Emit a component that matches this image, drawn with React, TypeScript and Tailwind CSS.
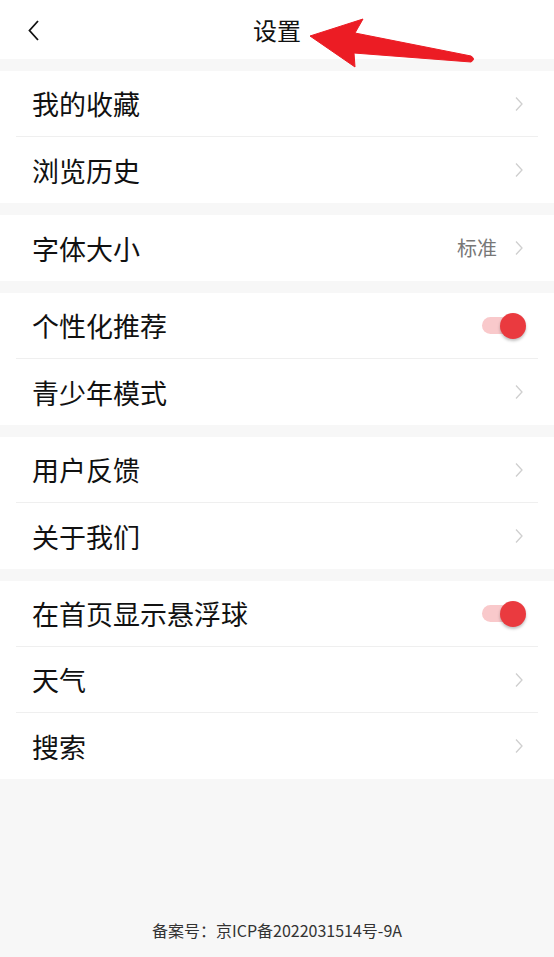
import React from "react";

type Row = { label: string; kind: "link" | "toggle"; value?: string };

const groups: Row[][] = [
  [
    { label: "我的收藏", kind: "link" },
    { label: "浏览历史", kind: "link" },
  ],
  [{ label: "字体大小", kind: "link", value: "标准" }],
  [
    { label: "个性化推荐", kind: "toggle" },
    { label: "青少年模式", kind: "link" },
  ],
  [
    { label: "用户反馈", kind: "link" },
    { label: "关于我们", kind: "link" },
  ],
  [
    { label: "在首页显示悬浮球", kind: "toggle" },
    { label: "天气", kind: "link" },
    { label: "搜索", kind: "link" },
  ],
];

function Chevron() {
  return (
    <svg width="10" height="16" viewBox="0 0 10 16" className="shrink-0">
      <path d="M2 1.5 L8 8 L2 14.5" fill="none" stroke="#cfcfcf" strokeWidth="1.3" />
    </svg>
  );
}

function Toggle() {
  return (
    <div className="relative flex h-[26px] w-[44px] items-center">
      <div className="h-[17px] w-[36px] rounded-full bg-[#f9c9cb]" />
      <div className="absolute right-0 top-0 h-[26px] w-[26px] rounded-full bg-[#ea3a3f] shadow-[0_2px_3px_rgba(0,0,0,0.25)]" />
    </div>
  );
}

export default function App() {
  return (
    <div
      className="flex min-h-[957px] w-[554px] flex-col bg-[#f7f7f7]"
      style={{ fontFamily: '"Noto Sans CJK SC", "Noto Sans", sans-serif' }}
    >
      {/* Header */}
      <header className="relative flex h-[59px] items-center justify-center bg-white">
        <svg width="14" height="22" viewBox="0 0 14 22" className="absolute left-[27px] top-[20px]">
          <path d="M11 1 L2.5 10.5 L11 20" fill="none" stroke="#111" strokeWidth="1.8" />
        </svg>
        <span className="text-[24px] text-[#111]">设置</span>
        <svg width="554" height="80" viewBox="0 0 554 80" className="pointer-events-none absolute left-0 top-0">
          <path
            d="M310 36 L363 19 L355 33 L471 56 Q476 59 471 62 L354 53 L355 67 Z"
            fill="#ec1c24"
            stroke="#ec1c24"
            strokeWidth="1"
            strokeLinejoin="round"
          />
        </svg>
      </header>

      <div className="mt-[12px] flex flex-col gap-[12px]">
        {groups.map((g, gi) => (
          <div key={gi} className="bg-white">
            {g.map((r, ri) => (
              <div
                key={r.label}
                className={`mx-[16px] flex h-[66px] items-center justify-between pl-[16px] pr-[14px] ${
                  ri < g.length - 1 ? "border-b border-[#efefef]" : ""
                }`}
              >
                <span className="text-[27px] leading-none text-[#111]">{r.label}</span>
                {r.kind === "toggle" ? (
                  <div className="-mr-[2px]">
                    <Toggle />
                  </div>
                ) : (
                  <div className="flex items-center gap-[17px]">
                    {r.value && <span className="text-[20px] text-[#777]">{r.value}</span>}
                    <Chevron />
                  </div>
                )}
              </div>
            ))}
          </div>
        ))}
      </div>

      <div className="flex-1" />
      <footer className="pb-[15px] text-center text-[16px] text-[#333]">备案号：京ICP备2022031514号-9A</footer>
    </div>
  );
}
